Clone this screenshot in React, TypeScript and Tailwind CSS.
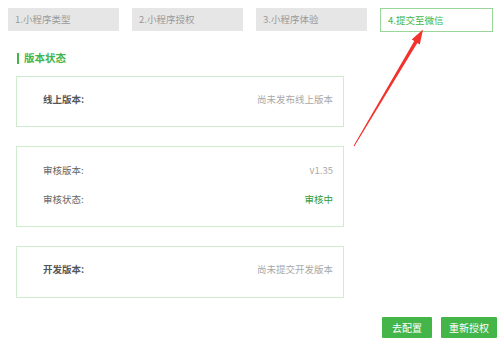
const steps = ["1.小程序类型", "2.小程序授权", "3.小程序体验", "4.提交至微信"];

function Row({
  label,
  value,
  valueClass,
  bold,
}: {
  label: string;
  value: string;
  valueClass: string;
  bold?: boolean;
}) {
  return (
    <div className="flex items-center justify-between leading-[14px]">
      <span className={bold ? "text-[#555] font-bold" : "text-[#666]"}>{label}</span>
      <span className={valueClass}>{value}</span>
    </div>
  );
}

export default function App() {
  return (
    <div
      className="relative w-[500px] h-[352px] bg-white overflow-hidden text-[9.5px]"
      style={{ fontFamily: '"Microsoft YaHei", "Noto Sans CJK SC", sans-serif' }}
    >
      {/* Step tabs */}
      <div className="flex gap-[13px] pl-[8px] pt-[8px]">
        {steps.map((s, i) => (
          <div
            key={s}
            className={
              i === 3
                ? "w-[113px] h-[24px] flex items-center pl-[7px] border border-[#9ad69a] bg-white text-[#44b549] text-[9.5px]"
                : "w-[111px] h-[23px] flex items-center pl-[7px] bg-[#e6e6e6] text-[#9a9a9a] text-[9.5px]"
            }
          >
            {s}
          </div>
        ))}
      </div>

      {/* Section title */}
      <div className="flex items-center ml-[17px] mt-[19px] h-[14px]">
        <div className="w-[2px] h-[11px] bg-[#44b549]" />
        <span className="ml-[5px] text-[10.5px] font-bold text-[#44b549]">版本状态</span>
      </div>

      <div className="ml-[16px] w-[328px] mt-[11px] flex flex-col gap-[19px]">
        <div className="border border-[#cfeccf] pl-[26px] pr-[10px] pt-[15px] pb-[20px]">
          <Row label="线上版本:" value="尚未发布线上版本" valueClass="text-[#a8a8a8]" bold />
        </div>
        <div className="border border-[#cfeccf] pl-[26px] pr-[10px] pt-[16px] pb-[20px] flex flex-col gap-[15px]">
          <Row label="审核版本:" value="v1.35" valueClass="text-[#a8a8a8]" />
          <Row label="审核状态:" value="审核中" valueClass="text-[#2f9a36]" />
        </div>
        <div className="border border-[#cfeccf] pl-[26px] pr-[10px] pt-[15px] pb-[21px]">
          <Row label="开发版本:" value="尚未提交开发版本" valueClass="text-[#a8a8a8]" bold />
        </div>
      </div>

      {/* Buttons */}
      <div className="flex justify-end gap-[9px] pr-[3px] mt-[19px]">
        <button className="w-[50px] h-[21px] bg-[#44b549] text-white text-[10px] rounded-[1px]">去配置</button>
        <button className="w-[56px] h-[21px] bg-[#44b549] text-white text-[10px] rounded-[1px]">重新授权</button>
      </div>

      {/* Annotation arrow */}
      <svg className="absolute left-0 top-0 pointer-events-none" width="500" height="352">
        <polygon
          points="354.4,146.2 417.3,42.9 419.8,44.6 423,29.5 411.7,39.5 414.3,41.1 353.6,145.8"
          fill="#f2322c"
        />
      </svg>
    </div>
  );
}
